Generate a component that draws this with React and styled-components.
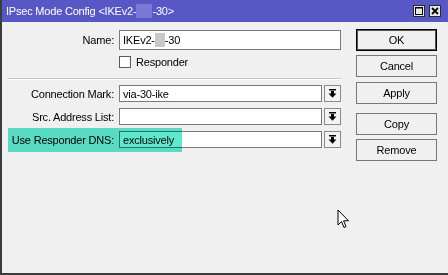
import React from 'react';
import styled, { createGlobalStyle } from 'styled-components';

const Global = createGlobalStyle`
  body {
    margin: 0;
    font-family: "Liberation Sans", Arial, sans-serif;
    font-size: 11px;
    letter-spacing: -0.2px;
    color: #000;
  }
`;

const Window = styled.div`
  position: relative;
  width: 448px;
  height: 275px;
  box-sizing: border-box;
  background: #f0f0f0;
  border-left: 2px solid #3c3c3c;
  border-bottom: 2px solid #3c3c3c;
  display: flex;
  flex-direction: column;
  overflow: hidden;
`;

const TitleBar = styled.div`
  height: 22px;
  margin-left: -2px;
  background: #5757c6;
  color: #fff;
  display: flex;
  align-items: center;
  padding: 0 6px;
  font-size: 11px;
`;

const Title = styled.div`
  flex: 1;
  display: flex;
  align-items: center;
  white-space: pre;
`;

const Redact = styled.span`
  display: inline-block;
  width: ${(p) => p.w}px;
  height: ${(p) => p.h}px;
  background: ${(p) => p.bg};
`;

const TitleBtns = styled.div`
  display: flex;
  gap: 4px;
  margin-right: 1px;
`;

const TitleBtn = styled.div`
  width: 12px;
  height: 12px;
  background: #e8e8e8;
  border: 1px solid #2a2a2a;
  box-sizing: border-box;
  display: flex;
  align-items: center;
  justify-content: center;
`;

const Body = styled.div`
  display: flex;
  padding-top: 7px;
`;

const Form = styled.div`
  width: 339px;
  box-sizing: border-box;
  padding-left: 6px;
  display: flex;
  flex-direction: column;
`;

const Row = styled.div`
  position: relative;
  display: flex;
  align-items: center;
  height: ${(p) => p.h || 17}px;
  margin-top: ${(p) => p.mt || 0}px;
`;

const Label = styled.div`
  width: 111px;
  flex-shrink: 0;
  box-sizing: border-box;
  text-align: right;
  padding-right: 5px;
  white-space: nowrap;
  position: relative;
  z-index: 1;
`;

const Input = styled.div`
  height: 100%;
  width: ${(p) => p.w}px;
  box-sizing: border-box;
  background: #fff;
  border: 1px solid #7a7a7a;
  display: flex;
  align-items: center;
  padding-left: 3px;
  white-space: pre;
`;

const DropBtn = styled.div`
  width: 17px;
  height: 17px;
  margin-left: 2px;
  box-sizing: border-box;
  border: 1px solid #8a8a8a;
  background: #f3f3f3;
  display: flex;
  align-items: center;
  justify-content: center;
`;

const Check = styled.div`
  width: 12px;
  height: 12px;
  box-sizing: border-box;
  border: 1px solid #5a5a5a;
  background: #fff;
  margin-left: 111px;
  margin-right: 5px;
`;

const Separator = styled.div`
  height: 1px;
  background: #c4c4c4;
  border-bottom: 1px solid #fff;
  margin: 10px 0 5px 0;
`;

const Highlight = styled.div`
  position: absolute;
  left: 0;
  top: -3px;
  width: 174px;
  height: 24px;
  background: #5de8cf;
  mix-blend-mode: multiply;
  z-index: 2;
`;

const Buttons = styled.div`
  margin-left: 15px;
  width: 81px;
  display: flex;
  flex-direction: column;
`;

const Button = styled.div`
  height: 22px;
  box-sizing: border-box;
  border: 1px solid ${(p) => (p.primary ? '#000' : '#777')};
  box-shadow: ${(p) => (p.primary ? 'inset 0 0 0 1px #555' : 'none')};
  background: #f0f0f0;
  display: flex;
  align-items: center;
  justify-content: center;
  margin-top: ${(p) => p.mt || 0}px;
`;

const Cursor = styled.svg`
  position: absolute;
  left: 335px;
  top: 209px;
`;

const DropIcon = () => (
  <svg width="9" height="9" viewBox="0 0 9 9">
    <rect x="1" y="0" width="7" height="1.5" fill="#000" />
    <rect x="3" y="2" width="3" height="3" fill="#000" />
    <polygon points="0.5,4.5 8.5,4.5 4.5,8.8" fill="#000" />
  </svg>
);

export default function App() {
  return (
    <>
      <Global />
      <Window>
        <TitleBar>
          <Title>
            IPsec Mode Config &lt;IKEv2-<Redact w={16} h={14} bg="#7a7ad6" />-30&gt;
          </Title>
          <TitleBtns>
            <TitleBtn>
              <svg width="8" height="8" viewBox="0 0 8 8">
                <rect x="0.5" y="0.5" width="7" height="7" fill="none" stroke="#000" />
                <rect x="0" y="0" width="8" height="1.5" fill="#000" />
              </svg>
            </TitleBtn>
            <TitleBtn>
              <svg width="8" height="8" viewBox="0 0 8 8">
                <path d="M1 1 L7 7 M7 1 L1 7" stroke="#000" strokeWidth="1.8" />
              </svg>
            </TitleBtn>
          </TitleBtns>
        </TitleBar>
        <Body>
          <Form>
            <Row h={20} mt={1}>
              <Label>Name:</Label>
              <Input w={222}>
                IKEv2-<Redact w={10} h={14} bg="#c8c8c8" />-30
              </Input>
            </Row>
            <Row h={12} mt={6}>
              <Check />
              Responder
            </Row>
            <Separator />
            <Row>
              <Label>Connection Mark:</Label>
              <Input w={203}>via-30-ike</Input>
              <DropBtn><DropIcon /></DropBtn>
            </Row>
            <Row mt={6}>
              <Label>Src. Address List:</Label>
              <Input w={203} />
              <DropBtn><DropIcon /></DropBtn>
            </Row>
            <Row mt={6}>
              <Highlight />
              <Label>Use Responder DNS:</Label>
              <Input w={203}>exclusively</Input>
              <DropBtn><DropIcon /></DropBtn>
            </Row>
          </Form>
          <Buttons>
            <Button primary>OK</Button>
            <Button mt={4}>Cancel</Button>
            <Button mt={5}>Apply</Button>
            <Button mt={9}>Copy</Button>
            <Button mt={4}>Remove</Button>
          </Buttons>
        </Body>
        <Cursor width="13" height="20" viewBox="0 0 13 20">
          <path d="M1 1 L1 16 L4.5 12.5 L7 18.5 L9 17.6 L6.6 11.8 L11.5 11.8 Z" fill="#fff" stroke="#000" strokeWidth="1" strokeLinejoin="miter" />
        </Cursor>
      </Window>
    </>
  );
}
